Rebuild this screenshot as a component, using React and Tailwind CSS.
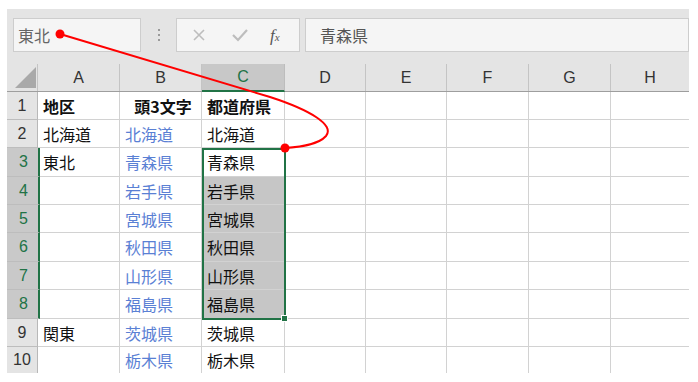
import React from 'react';

const COLS = [
  { key: 'A', w: 'w-[82px]' },
  { key: 'B', w: 'w-[82px]' },
  { key: 'C', w: 'w-[83px]' },
  { key: 'D', w: 'w-[81px]' },
  { key: 'E', w: 'w-[81px]' },
  { key: 'F', w: 'w-[82px]' },
  { key: 'G', w: 'w-[82px]' },
  { key: 'H', w: 'w-[78px]' },
];

const ROWS = [
  { n: 1, h: 'h-[28px]', a: '地区', b: '頭3文字', c: '都道府県', bold: true },
  { n: 2, h: 'h-[28px]', a: '北海道', b: '北海道', c: '北海道' },
  { n: 3, h: 'h-[29px]', a: '東北', b: '青森県', c: '青森県' },
  { n: 4, h: 'h-[28px]', b: '岩手県', c: '岩手県' },
  { n: 5, h: 'h-[28px]', b: '宮城県', c: '宮城県' },
  { n: 6, h: 'h-[29px]', b: '秋田県', c: '秋田県' },
  { n: 7, h: 'h-[28px]', b: '山形県', c: '山形県' },
  { n: 8, h: 'h-[29px]', b: '福島県', c: '福島県' },
  { n: 9, h: 'h-[28px]', a: '関東', b: '茨城県', c: '茨城県' },
  { n: 10, h: 'h-[26px]', b: '栃木県', c: '栃木県' },
];

const jp = "font-['Noto_Sans_CJK_JP',sans-serif]";
const latin = "font-['Liberation_Sans',Arial,sans-serif]";

const FormulaBar = () => (
  <div className="h-[55px] bg-[#e4e4e4] flex items-start pt-[9px]">
    {/* name box */}
    <div className={`ml-[6px] w-[128px] h-[34px] bg-[#f5f5f5] border border-[#cdcdcd] flex items-center pl-[4px] text-[16px] leading-none text-[#666] ${jp}`}>
      東北
    </div>
    {/* grip dots */}
    <div className="w-[35px] h-[34px] flex flex-col items-center justify-center gap-[3px]">
      <span className="w-[2px] h-[2px] bg-[#9a9a9a]" />
      <span className="w-[2px] h-[2px] bg-[#9a9a9a]" />
      <span className="w-[2px] h-[2px] bg-[#9a9a9a]" />
    </div>
    {/* buttons */}
    <div className="w-[124px] h-[34px] bg-[#f5f5f5] border border-[#cdcdcd] flex items-center">
      <svg width="14" height="14" viewBox="0 0 14 14" className="ml-[15px]">
        <path d="M2 2 L12 12 M12 2 L2 12" stroke="#bdbdbd" strokeWidth="1.6" />
      </svg>
      <svg width="18" height="14" viewBox="0 0 18 14" className="ml-[25px]">
        <path d="M2 7 L7 12 L16 2" stroke="#bdbdbd" strokeWidth="2.2" fill="none" />
      </svg>
      <span className="ml-[21px] text-[#555] italic font-['Liberation_Serif',serif] text-[17px] leading-none">
        f<span className="text-[11px]">x</span>
      </span>
    </div>
    {/* formula input */}
    <div className={`ml-[5px] flex-1 h-[34px] bg-[#f5f5f5] border border-[#cdcdcd] flex items-center pl-[14px] text-[16px] leading-none text-[#555] ${jp}`}>
      青森県
    </div>
  </div>
);

const HeaderRow = () => (
  <div className="flex h-[28px] bg-[#e4e4e4] border-b border-[#9e9e9e]">
    <div className="w-[31px] border-r border-[#c4c4c4] flex items-end justify-end pr-[1px] pb-[3px]">
      <svg width="21" height="21" viewBox="0 0 21 21">
        <path d="M21 0 L21 21 L0 21 Z" fill="#a9a9a9" />
      </svg>
    </div>
    {COLS.map((c) =>
      c.key === 'C' ? (
        <div
          key={c.key}
          className={`${c.w} bg-[#c8c8c8] border-r border-[#bdbdbd] border-b-2 border-b-[#217346] -mb-px flex items-center justify-center text-[16px] leading-none text-[#217346] ${latin}`}
        >
          {c.key}
        </div>
      ) : (
        <div
          key={c.key}
          className={`${c.w} ${c.key === 'H' ? '' : 'border-r border-[#c4c4c4]'} flex items-center justify-center text-[16px] leading-none text-[#333] ${latin}`}
        >
          {c.key}
        </div>
      )
    )}
  </div>
);

const Cell = ({ w, children, className = '' }) => (
  <div className={`${w} border-r border-[#d2d2d2] flex items-center pl-[5px] text-[16px] leading-none ${jp} ${className}`}>
    {children}
  </div>
);

const GridRow = ({ row, last }) => {
  const sel = row.n >= 3 && row.n <= 8;
  const selFill = row.n >= 4 && row.n <= 8;
  return (
    <div className={`flex ${row.h} ${last ? '' : 'border-b border-[#d2d2d2]'}`}>
      <div
        className={`flex items-center justify-center text-[16px] leading-none ${latin} ${
          sel
            ? 'w-[33px] -mr-[2px] bg-[#c9c9c9] text-[#217346] border-r-2 border-[#217346] pl-[2px]'
            : 'w-[31px] bg-[#e4e4e4] text-[#333] border-r border-[#b8b8b8]'
        } ${last ? '' : 'border-b border-b-[#bdbdbd] -mb-px'}`}
      >
        {row.n}
      </div>
      <Cell w="w-[82px]" className={`text-[#111] ${row.bold ? 'font-bold' : ''}`}>
        {row.a}
      </Cell>
      <Cell
        w="w-[82px]"
        className={row.bold ? 'font-bold text-[#111] justify-center pl-0' : 'text-[#5a80d4]'}
      >
        {row.b}
      </Cell>
      <Cell w="w-[83px]" className={`text-[#111] ${row.bold ? 'font-bold' : ''} ${selFill ? 'bg-[#c6c6c6]' : ''}`}>
        {row.c}
      </Cell>
      <Cell w="w-[81px]" />
      <Cell w="w-[81px]" />
      <Cell w="w-[82px]" />
      <Cell w="w-[82px]" />
      <div className="w-[78px]" />
    </div>
  );
};

export default function App() {
  return (
    <div className="relative w-[698px] h-[382px] bg-white overflow-hidden">
      <div className="ml-[7px] mt-[9px] w-[682px]">
        <FormulaBar />
        <HeaderRow />
        {ROWS.map((r, i) => (
          <GridRow key={r.n} row={r} last={i === ROWS.length - 1} />
        ))}
      </div>

      {/* selection C3:C8 */}
      <div className="absolute left-[202px] top-[148px] w-[84px] h-[172px] border-2 border-[#217346] pointer-events-none" />
      <div className="absolute left-[281px] top-[315px] w-[7px] h-[7px] bg-[#217346] border border-white" />

      {/* red annotation connector */}
      <svg className="absolute left-0 top-0 pointer-events-none" width="698" height="382" viewBox="0 0 698 382">
        <path
          d="M60 34 L270 97 C310 110 335 125 326 136 C318 145 300 147 285 148"
          stroke="#ff0000"
          strokeWidth="2"
          fill="none"
        />
        <circle cx="60" cy="34" r="4.5" fill="#ff0000" />
        <circle cx="285" cy="148" r="4.5" fill="#ff0000" />
      </svg>
    </div>
  );
}
